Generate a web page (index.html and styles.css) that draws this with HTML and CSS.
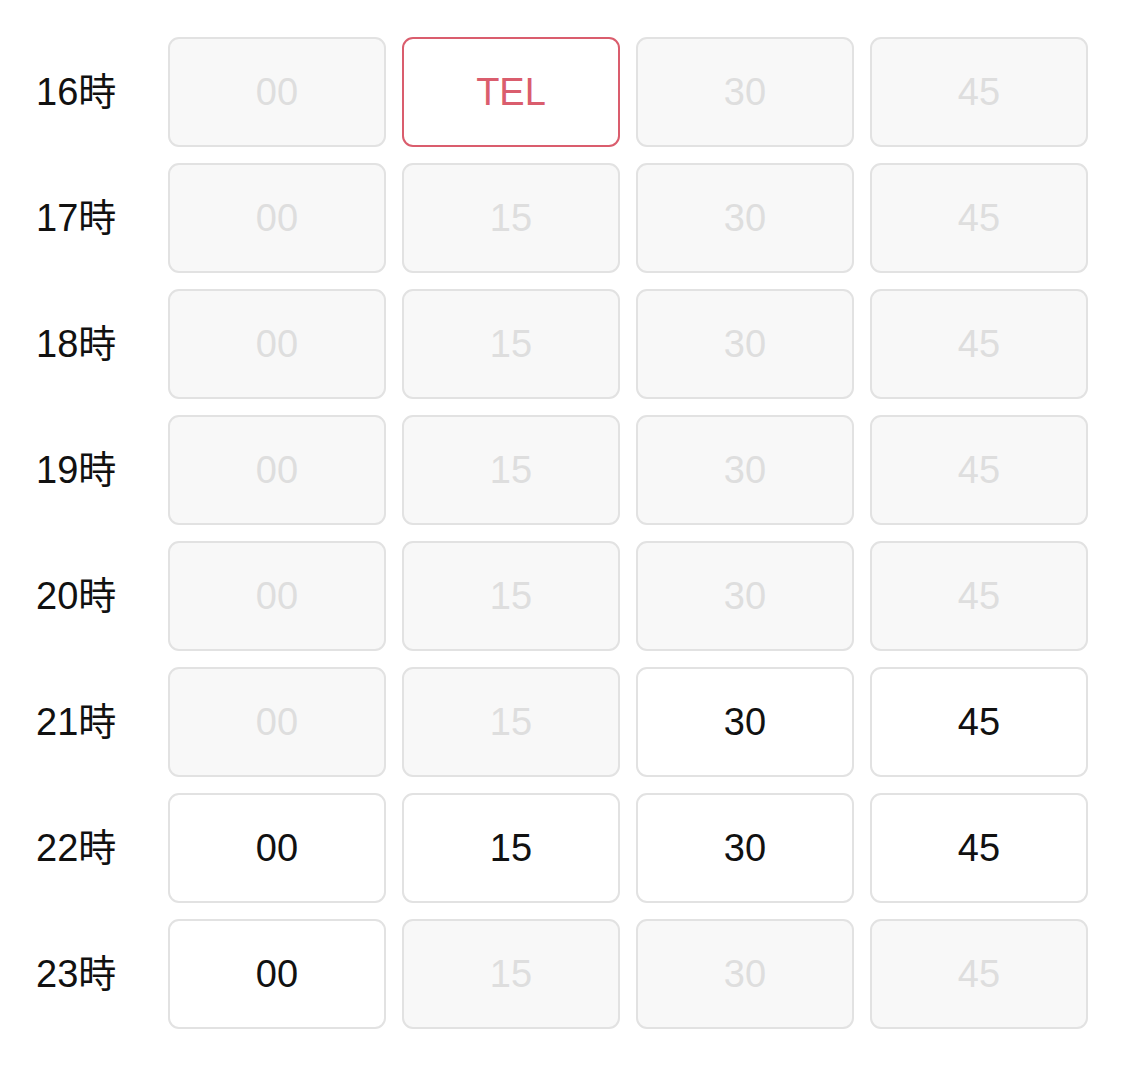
FILE: index.html
```html
<!DOCTYPE html>
<html lang="ja">
  <head>
    <meta charset="UTF-8" />
    <title>時間選択</title>
    <link rel="stylesheet" href="styles.css">
  </head>
  <body>
    <div class="slots">
      <div class="slot-row">
        <div class="hour">16時</div>
        <div class="slot off">00</div>
        <div class="slot tel">TEL</div>
        <div class="slot off">30</div>
        <div class="slot off">45</div>
      </div>
      <div class="slot-row">
        <div class="hour">17時</div>
        <div class="slot off">00</div>
        <div class="slot off">15</div>
        <div class="slot off">30</div>
        <div class="slot off">45</div>
      </div>
      <div class="slot-row">
        <div class="hour">18時</div>
        <div class="slot off">00</div>
        <div class="slot off">15</div>
        <div class="slot off">30</div>
        <div class="slot off">45</div>
      </div>
      <div class="slot-row">
        <div class="hour">19時</div>
        <div class="slot off">00</div>
        <div class="slot off">15</div>
        <div class="slot off">30</div>
        <div class="slot off">45</div>
      </div>
      <div class="slot-row">
        <div class="hour">20時</div>
        <div class="slot off">00</div>
        <div class="slot off">15</div>
        <div class="slot off">30</div>
        <div class="slot off">45</div>
      </div>
      <div class="slot-row">
        <div class="hour">21時</div>
        <div class="slot off">00</div>
        <div class="slot off">15</div>
        <div class="slot">30</div>
        <div class="slot">45</div>
      </div>
      <div class="slot-row">
        <div class="hour">22時</div>
        <div class="slot">00</div>
        <div class="slot">15</div>
        <div class="slot">30</div>
        <div class="slot">45</div>
      </div>
      <div class="slot-row">
        <div class="hour">23時</div>
        <div class="slot">00</div>
        <div class="slot off">15</div>
        <div class="slot off">30</div>
        <div class="slot off">45</div>
      </div>
    </div>
  </body>
</html>
```

FILE: styles.css
```css
body {
  font-family: "Liberation Sans", "Noto Sans CJK JP", sans-serif;
  margin: 0;
  padding: 37px 37px 37px 36px;
  background: #fff;
  color: #111;
}

.slots {
  display: flex;
  flex-direction: column;
  gap: 16px;
}

.slot-row {
  display: grid;
  grid-template-columns: 116px repeat(4, 218px);
  column-gap: 16px;
  height: 110px;
}

.hour {
  font-size: 38px;
  line-height: 1;
  display: flex;
  align-items: center;
}

.slot {
  display: flex;
  align-items: center;
  justify-content: center;
  font-size: 38px;
  line-height: 1;
  border: 2px solid #e2e2e2;
  border-radius: 11px;
  background: #fff;
  color: #111;
}

.slot.off {
  background: #f8f8f8;
  color: #dedede;
}

.slot.tel {
  border-color: #da5d6d;
  color: #da5d6d;
}
```
